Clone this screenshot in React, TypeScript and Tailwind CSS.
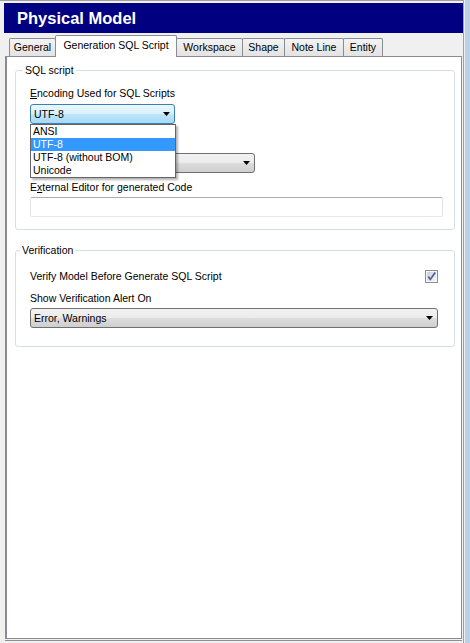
import React from "react";

function Arrow() {
  return (
    <svg width="7" height="4" viewBox="0 0 7 4" className="block">
      <path d="M0 0H7L3.5 4Z" fill="#000" />
    </svg>
  );
}

function Combo({ text, w, hot }: { text: string; w: string; hot?: boolean }) {
  return (
    <div
      className={
        "h-[20px] rounded-[3px] border flex items-center justify-between pl-[3px] pr-[4px] " +
        w +
        (hot
          ? " border-[#3c7fb1] bg-[linear-gradient(#eaf6fd_0%,#d9f0fc_50%,#bee6fd_50%,#a7d9f5_100%)]"
          : " border-[#707070] bg-[linear-gradient(#f2f2f2_0%,#ebebeb_50%,#dddddd_50%,#cfcfcf_100%)]")
      }
    >
      <span className="leading-[13px]">{text}</span>
      <Arrow />
    </div>
  );
}

function Tab({ label, w, active, first }: { label: string; w: string; active?: boolean; first?: boolean }) {
  return (
    <div
      className={
        "flex items-center justify-center border-t border-l border-r border-[#898c95] rounded-t-[2px] " +
        w +
        (first ? "" : " -ml-px") +
        (active
          ? " h-[22px] mb-[-1px] bg-white relative z-10 pb-[3px]"
          : " h-[18px] bg-[linear-gradient(#f3f3f3,#e3e3e3)]")
      }
    >
      <span className="leading-[13px]">{label}</span>
    </div>
  );
}

function Check() {
  return (
    <svg width="13" height="13" viewBox="0 0 13 13" className="block">
      <defs>
        <linearGradient id="cbg" x1="0" y1="0" x2="1" y2="1">
          <stop offset="0" stopColor="#cbcfd5" />
          <stop offset="1" stopColor="#f6f6f6" />
        </linearGradient>
      </defs>
      <rect x="0.5" y="0.5" width="12" height="12" fill="#f4f4f4" stroke="#8e8f8f" />
      <rect x="2" y="2" width="9" height="9" fill="url(#cbg)" />
      <path d="M3.2 6.6 L5.3 9.4 L10.2 2.6" stroke="#4a5f97" strokeWidth="1.7" fill="none" />
    </svg>
  );
}

export default function App() {
  return (
    <div className="w-[470px] h-[643px] bg-[#f0f0f0] flex text-[10.5px] text-black font-['Liberation_Sans',Arial,sans-serif] overflow-hidden">
      <div className="w-[464px] h-full border-t border-r border-[#a0a0a0] flex flex-col">
        <div className="mt-[2px] ml-[4px] h-[30px] bg-[#000080] flex items-center pl-[13px] text-white font-bold text-[16.5px] shrink-0">
          Physical Model
        </div>
        <div className="h-[23px] flex items-end pl-[9px] shrink-0">
          <Tab label="General" w="w-[47px]" first />
          <Tab label="Generation SQL Script" w="w-[122px]" active />
          <Tab label="Workspace" w="w-[67px]" />
          <Tab label="Shape" w="w-[43px]" />
          <Tab label="Note Line" w="w-[60px]" />
          <Tab label="Entity" w="w-[40px]" />
        </div>
        <div className="ml-[5px] mr-[1px] h-[585px] border-b border-[#8d8f95] pb-[1px] mb-[2px]">
          <div className="h-full bg-white border border-[#898c95] border-l-2 pl-[8px] pr-[6px] pt-[13px]">
            {/* SQL script group */}
            <div className="relative border border-[#d5dfe5] rounded-[3px] pl-[14px] pt-[16px] pb-[12px]">
              <span className="absolute top-[-7px] left-[7px] bg-white px-[2px] leading-[13px]">SQL script</span>
              <div className="leading-[13px]">
                <span className="underline">E</span>ncoding Used for SQL Scripts
              </div>
              <div className="relative mt-[4px] w-[145px] z-20">
                <Combo text="UTF-8" w="w-[145px]" hot />
                <div className="absolute top-[20px] left-0 w-[146px] h-[54px] bg-white border border-[#646464] shadow-[2px_2px_2px_rgba(0,0,0,0.3)]">
                  <div className="h-[13px] leading-[13px] pl-[2px]">ANSI</div>
                  <div className="h-[13px] leading-[13px] pl-[2px] bg-[#3399ff] text-white">UTF-8</div>
                  <div className="h-[13px] leading-[13px] pl-[2px]">UTF-8 (without BOM)</div>
                  <div className="h-[13px] leading-[13px] pl-[2px]">Unicode</div>
                </div>
              </div>
              <div className="mt-[12px] h-[13px]" />
              <div className="mt-[4px]">
                <Combo text="" w="w-[225px]" />
              </div>
              <div className="mt-[8px] leading-[13px]">
                E<span className="underline">x</span>ternal Editor for generated Code
              </div>
              <div className="mt-[3px] w-[413px] h-[20px] rounded-[2px] border border-[#e2e3ea] border-t-[#abadb3] border-b-[#e3e9ef] bg-white" />
            </div>

            {/* Verification group */}
            <div className="relative mt-[20px] border border-[#d5dfe5] rounded-[3px] pl-[14px] pr-[16px] pt-[19px] pb-[18px]">
              <span className="absolute top-[-7px] left-[4px] bg-white px-[2px] leading-[13px]">Verification</span>
              <div className="h-[13px] flex items-center justify-between">
                <span className="leading-[13px]">Verify Model Before Generate SQL Script</span>
                <Check />
              </div>
              <div className="mt-[9px] leading-[13px]">Show Verification Alert On</div>
              <div className="mt-[3px]">
                <Combo text="Error, Warnings" w="w-full" />
              </div>
            </div>
          </div>
        </div>
      </div>
      <div className="w-[1px] h-full bg-[#f0f0f0]" />
      <div className="w-[5px] h-full bg-[#b9d1ea]" />
    </div>
  );
}
